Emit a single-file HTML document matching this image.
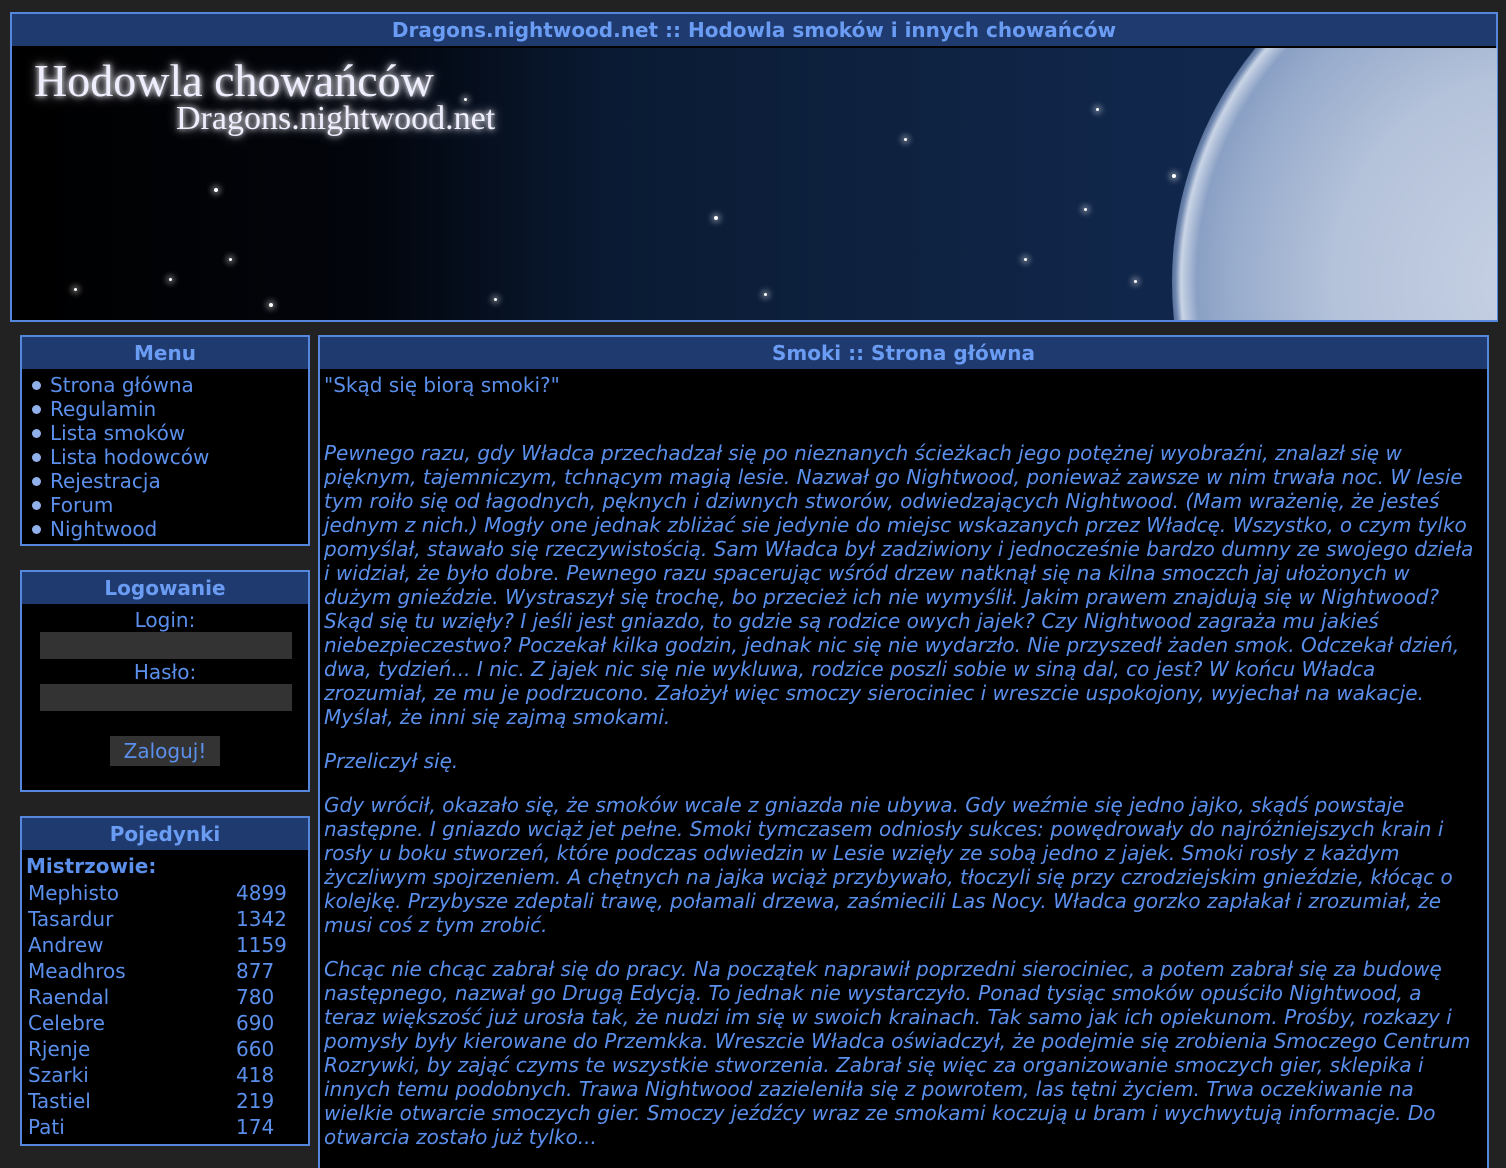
<!DOCTYPE html>
<html><head><meta charset="utf-8"><style>
*{margin:0;padding:0;box-sizing:border-box}
html{width:1506px;height:1168px;overflow:hidden}
body{width:1506px;height:1168px;background:#222;overflow:hidden;position:relative;font-family:"DejaVu Sans","Liberation Sans",sans-serif;color:#5b8fec;font-size:20px}
.box{position:absolute;border:2px solid #5588dd;background:#000}
.tb{background:#1f3a6e;height:32px;text-align:center;font-weight:bold;font-size:20px;line-height:32px;color:#6a9cf4}
.ab{position:absolute;white-space:nowrap}
.ln{white-space:nowrap;line-height:24px;height:24px}
#banner{position:absolute;left:2px;top:34px;width:1483px;height:272px;overflow:hidden;
background:linear-gradient(90deg,#000 0%,#02050c 24%,#0a1a33 40%,#0e2240 60%,#10264a 75%,#142c52 100%)}
.moon{position:absolute;left:1158px;top:-136px;width:740px;height:740px;border-radius:50%;
background:radial-gradient(circle at 50% 50%,#c8d2e4 0%,#b4c2da 40%,#97abcc 60%,#8aa0c4 66%,#c9d4e6 69%,#7088b0 70%,#2a4470 72%,rgba(16,38,74,0) 76%)}
.st{position:absolute;width:4px;height:4px;border-radius:50%;background:#fff;box-shadow:0 0 6px 3px rgba(255,255,255,.35)}
.bt{position:absolute;font-family:"Liberation Serif",serif;color:#eef;text-shadow:0 0 6px #fff,0 0 12px #aab}
.mi{position:absolute;left:10px;white-space:nowrap;line-height:24px}
.mi:before{content:"";display:inline-block;width:9px;height:9px;border-radius:50%;background:#8fb0e8;margin-right:9px;vertical-align:2px}
.inp{position:absolute;left:18px;width:252px;height:27px;background:#333}
</style></head><body>

<div class="box" style="left:10px;top:12px;width:1488px;height:310px;background:#000">
  <div class="tb" style="height:32px">Dragons.nightwood.net :: Hodowla smoków i innych chowańców</div>
  <div id="banner">
    <div class="moon"></div>
    <div class="st" style="left:200px;top:140px"></div>
    <div class="st" style="left:700px;top:168px"></div>
    <div class="st" style="left:255px;top:255px"></div>
    <div class="st" style="left:215px;top:210px;width:3px;height:3px"></div>
    <div class="st" style="left:450px;top:50px;width:3px;height:3px"></div>
    <div class="st" style="left:480px;top:250px;width:3px;height:3px"></div>
    <div class="st" style="left:750px;top:245px;width:3px;height:3px"></div>
    <div class="st" style="left:60px;top:240px;width:3px;height:3px"></div>
    <div class="st" style="left:155px;top:230px;width:3px;height:3px"></div>
    <div class="st" style="left:1082px;top:60px;width:3px;height:3px"></div>
    <div class="st" style="left:1158px;top:126px"></div>
    <div class="st" style="left:1070px;top:160px;width:3px;height:3px"></div>
    <div class="st" style="left:1120px;top:232px;width:3px;height:3px"></div>
    <div class="st" style="left:1010px;top:210px;width:3px;height:3px"></div>
    <div class="st" style="left:890px;top:90px;width:3px;height:3px"></div>
    <div class="bt" style="left:20px;top:6px;font-size:46px">Hodowla chowańców</div>
    <div class="bt" style="left:162px;top:52px;font-size:34px">Dragons.nightwood.net</div>
  </div>
</div>

<div class="box" style="left:20px;top:335px;width:290px;height:211px">
  <div class="tb">Menu</div>
  <div class="mi" style="top:36px">Strona główna</div>
  <div class="mi" style="top:60px">Regulamin</div>
  <div class="mi" style="top:84px">Lista smoków</div>
  <div class="mi" style="top:108px">Lista hodowców</div>
  <div class="mi" style="top:132px">Rejestracja</div>
  <div class="mi" style="top:156px">Forum</div>
  <div class="mi" style="top:180px">Nightwood</div>
</div>

<div class="box" style="left:20px;top:570px;width:290px;height:222px">
  <div class="tb">Logowanie</div>
  <div class="ab" style="left:0;width:286px;text-align:center;top:36px">Login:</div>
  <div class="inp" style="top:60px"></div>
  <div class="ab" style="left:0;width:286px;text-align:center;top:88px">Hasło:</div>
  <div class="inp" style="top:112px"></div>
  <div class="ab" style="left:88px;top:164px;width:110px;height:30px;background:#333;text-align:center;line-height:30px">Zaloguj!</div>
</div>

<div class="box" style="left:20px;top:816px;width:290px;height:330px">
  <div class="tb">Pojedynki</div>
  <div class="ab" style="left:4px;top:36px;font-weight:bold">Mistrzowie:</div>
  <div class="ab" style="left:6px;top:62px;line-height:26px">Mephisto<br>Tasardur<br>Andrew<br>Meadhros<br>Raendal<br>Celebre<br>Rjenje<br>Szarki<br>Tastiel<br>Pati</div>
  <div class="ab" style="left:214px;top:62px;line-height:26px">4899<br>1342<br>1159<br>877<br>780<br>690<br>660<br>418<br>219<br>174</div>
</div>

<div class="box" style="left:318px;top:335px;width:1171px;height:840px;overflow:hidden">
  <div class="tb">Smoki :: Strona główna</div>
  <div class="ab" style="left:4px;top:36px">"Skąd się biorą smoki?"</div>
  <div class="ab" style="left:4px;top:104px;font-style:italic">
<div class="ln">Pewnego razu, gdy Władca przechadzał się po nieznanych ścieżkach jego potężnej wyobraźni, znalazł się w</div>
<div class="ln">pięknym, tajemniczym, tchnącym magią lesie. Nazwał go Nightwood, ponieważ zawsze w nim trwała noc. W lesie</div>
<div class="ln">tym roiło się od łagodnych, pęknych i dziwnych stworów, odwiedzających Nightwood. (Mam wrażenię, że jesteś</div>
<div class="ln">jednym z nich.) Mogły one jednak zbliżać sie jedynie do miejsc wskazanych przez Władcę. Wszystko, o czym tylko</div>
<div class="ln">pomyślał, stawało się rzeczywistością. Sam Władca był zadziwiony i jednocześnie bardzo dumny ze swojego dzieła</div>
<div class="ln">i widział, że było dobre. Pewnego razu spacerując wśród drzew natknął się na kilna smoczch jaj ułożonych w</div>
<div class="ln">dużym gnieździe. Wystraszył się trochę, bo przecież ich nie wymyślił. Jakim prawem znajdują się w Nightwood?</div>
<div class="ln">Skąd się tu wzięły? I jeśli jest gniazdo, to gdzie są rodzice owych jajek? Czy Nightwood zagraża mu jakieś</div>
<div class="ln">niebezpieczestwo? Poczekał kilka godzin, jednak nic się nie wydarzło. Nie przyszedł żaden smok. Odczekał dzień,</div>
<div class="ln">dwa, tydzień... I nic. Z jajek nic się nie wykluwa, rodzice poszli sobie w siną dal, co jest? W końcu Władca</div>
<div class="ln">zrozumiał, ze mu je podrzucono. Założył więc smoczy sierociniec i wreszcie uspokojony, wyjechał na wakacje.</div>
<div class="ln">Myślał, że inni się zajmą smokami.</div>
<div class="ln" style="margin-top:20px">Przeliczył się.</div>
<div class="ln" style="margin-top:20px">Gdy wrócił, okazało się, że smoków wcale z gniazda nie ubywa. Gdy weźmie się jedno jajko, skądś powstaje</div>
<div class="ln">następne. I gniazdo wciąż jet pełne. Smoki tymczasem odniosły sukces: powędrowały do najróżniejszych krain i</div>
<div class="ln">rosły u boku stworzeń, które podczas odwiedzin w Lesie wzięły ze sobą jedno z jajek. Smoki rosły z każdym</div>
<div class="ln">życzliwym spojrzeniem. A chętnych na jajka wciąż przybywało, tłoczyli się przy czrodziejskim gnieździe, kłócąc o</div>
<div class="ln">kolejkę. Przybysze zdeptali trawę, połamali drzewa, zaśmiecili Las Nocy. Władca gorzko zapłakał i zrozumiał, że</div>
<div class="ln">musi coś z tym zrobić.</div>
<div class="ln" style="margin-top:20px">Chcąc nie chcąc zabrał się do pracy. Na początek naprawił poprzedni sierociniec, a potem zabrał się za budowę</div>
<div class="ln">następnego, nazwał go Drugą Edycją. To jednak nie wystarczyło. Ponad tysiąc smoków opuściło Nightwood, a</div>
<div class="ln">teraz większość już urosła tak, że nudzi im się w swoich krainach. Tak samo jak ich opiekunom. Prośby, rozkazy i</div>
<div class="ln">pomysły były kierowane do Przemkka. Wreszcie Władca oświadczył, że podejmie się zrobienia Smoczego Centrum</div>
<div class="ln">Rozrywki, by zająć czyms te wszystkie stworzenia. Zabrał się więc za organizowanie smoczych gier, sklepika i</div>
<div class="ln">innych temu podobnych. Trawa Nightwood zazieleniła się z powrotem, las tętni życiem. Trwa oczekiwanie na</div>
<div class="ln">wielkie otwarcie smoczych gier. Smoczy jeźdźcy wraz ze smokami koczują u bram i wychwytują informacje. Do</div>
<div class="ln">otwarcia zostało już tylko...</div>
  </div>
</div>
</body></html>
